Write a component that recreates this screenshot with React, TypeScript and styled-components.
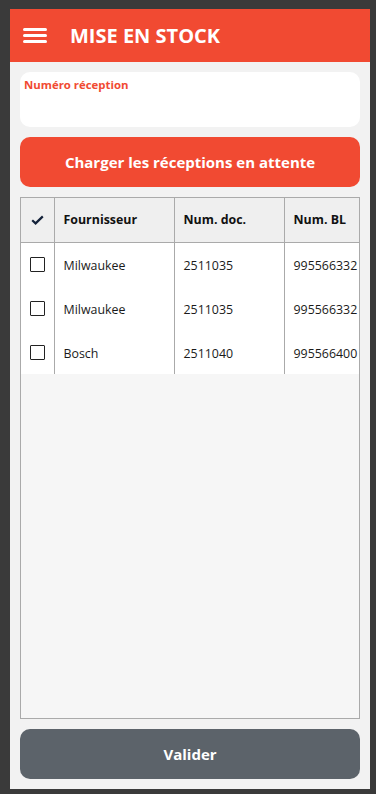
import styled, { createGlobalStyle } from "styled-components"

const GlobalStyle = createGlobalStyle`
    html, body {
        margin: 0;
        padding: 0;
        background: #3a3a3a;
    }
    * {
        box-sizing: border-box;
    }
`

const Frame = styled.div`
    display: flex;
    flex-direction: column;
    width: 360px;
    height: 780px;
    margin: 9px 6px 5px 10px;
    background-color: #f2f2f2;
    font-family: "Open Sans", "Noto Sans", sans-serif;
    overflow: hidden;
`

const Header = styled.header`
    display: flex;
    align-items: center;
    height: 53px;
    padding: 0 0 0 13px;
    background-color: #f14a32;
    color: #fff;
    flex-shrink: 0;
`

const MenuButton = styled.button`
    display: flex;
    flex-direction: column;
    justify-content: space-between;
    width: 24px;
    height: 15px;
    padding: 0;
    margin-right: 23px;
    border: none;
    background: none;
    cursor: pointer;

    span {
        display: block;
        height: 3px;
        border-radius: 2px;
        background: #fff;
    }
`

const Title = styled.h1`
    margin: 0;
    font-size: 20px;
    font-weight: 700;
    letter-spacing: 0;
`

const Content = styled.main`
    display: flex;
    flex-direction: column;
    flex: 1;
    gap: 10px;
    padding: 10px;
    min-height: 0;
`

const InputCard = styled.label`
    display: flex;
    flex-direction: column;
    height: 55px;
    padding: 5px 4px;
    border-radius: 10px;
    background: #fff;
    flex-shrink: 0;

    span {
        color: #f14a32;
        font-size: 11.4px;
        font-weight: 700;
        line-height: 16px;
    }

    input {
        flex: 1;
        border: none;
        outline: none;
        background: transparent;
        font-family: inherit;
        font-size: 14px;
    }
`

const ActionButton = styled.button<{ $tone: "red" | "grey" }>`
    height: 50px;
    flex-shrink: 0;
    border: none;
    border-radius: 10px;
    background-color: ${p => (p.$tone === "red" ? "#f14a32" : "#5c636a")};
    color: #fff;
    font-family: inherit;
    font-size: 15px;
    font-weight: 700;
    cursor: pointer;
`

const TableBox = styled.div`
    flex: 1;
    min-height: 0;
    border: 1px solid #aaa;
    background: #f6f6f6;
    overflow: hidden;
`

const Table = styled.table`
    width: 420px;
    border-collapse: collapse;
    table-layout: fixed;
    font-size: 12.4px;
    color: #1a1a1a;
`

const HeadCell = styled.th<{ $w: number }>`
    width: ${p => p.$w}px;
    height: 44px;
    padding: 0 9px;
    text-align: left;
    font-weight: 700;
    background: #efefef;
    border-right: 1px solid #aaa;
    border-bottom: 1px solid #aaa;
    color: #111;
    white-space: nowrap;

    &:first-child {
        padding: 0;
        text-align: center;
    }
`

const Cell = styled.td`
    height: 44px;
    padding: 3px 9px 0;
    background: #fff;
    border-right: 1px solid #aaa;
    white-space: nowrap;

    &:first-child {
        padding: 0 0 0 9px;
    }
`

const Box = styled.input`
    appearance: none;
    display: block;
    width: 15px;
    height: 15px;
    margin: 0;
    border: 1px solid #222;
    background: #fff;
    border-radius: 1px;
`

const rows = [
    { supplier: "Milwaukee", doc: "2511035", bl: "995566332" },
    { supplier: "Milwaukee", doc: "2511035", bl: "995566332" },
    { supplier: "Bosch", doc: "2511040", bl: "995566400" },
]

export default function App() {
    return (
        <>
            <GlobalStyle />
            <Frame>
                <Header>
                    <MenuButton aria-label="menu">
                        <span />
                        <span />
                        <span />
                    </MenuButton>
                    <Title>MISE EN STOCK</Title>
                </Header>
                <Content>
                    <InputCard>
                        <span>Numéro réception</span>
                        <input type="text" />
                    </InputCard>
                    <ActionButton $tone="red">Charger les réceptions en attente</ActionButton>
                    <TableBox>
                        <Table>
                            <thead>
                                <tr>
                                    <HeadCell $w={33}>
                                        <svg width="13" height="10" viewBox="0 0 13 10" style={{ display: "block", margin: "0 auto" }}>
                                            <path d="M1.2 5.2 L4.6 8.4 L11.8 1.4" fill="none" stroke="#14223a" strokeWidth="2.2" />
                                        </svg>
                                    </HeadCell>
                                    <HeadCell $w={120}>Fournisseur</HeadCell>
                                    <HeadCell $w={110}>Num. doc.</HeadCell>
                                    <HeadCell $w={157}>Num. BL</HeadCell>
                                </tr>
                            </thead>
                            <tbody>
                                {rows.map((r, i) => (
                                    <tr key={i}>
                                        <Cell><Box type="checkbox" /></Cell>
                                        <Cell>{r.supplier}</Cell>
                                        <Cell>{r.doc}</Cell>
                                        <Cell>{r.bl}</Cell>
                                    </tr>
                                ))}
                            </tbody>
                        </Table>
                    </TableBox>
                    <ActionButton $tone="grey">Valider</ActionButton>
                </Content>
            </Frame>
        </>
    )
}
